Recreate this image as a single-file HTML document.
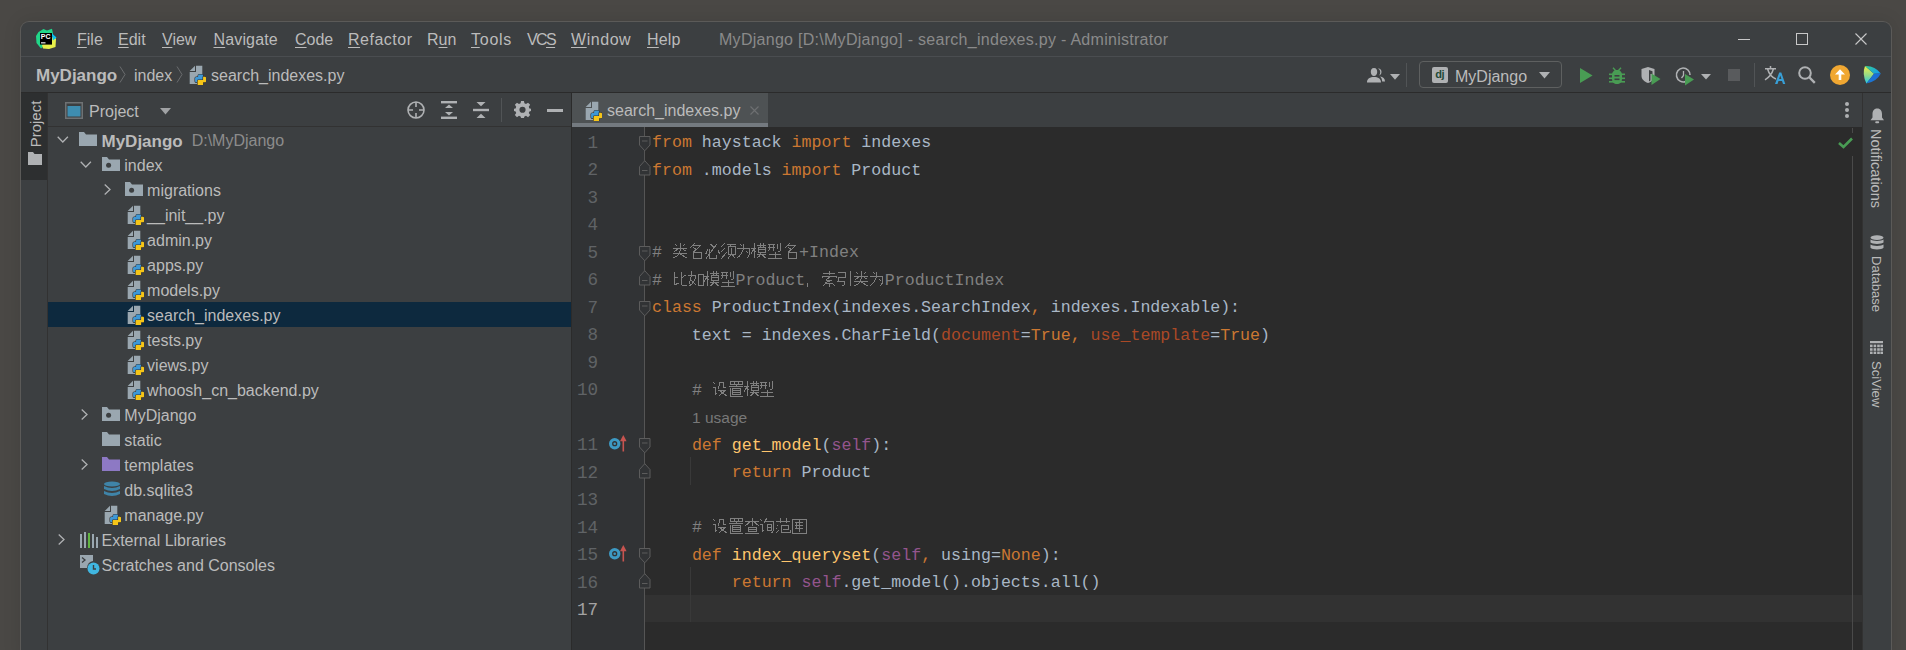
<!DOCTYPE html><html><head><meta charset="utf-8"><style>
*{margin:0;padding:0;box-sizing:border-box}
html,body{width:1906px;height:650px;overflow:hidden;background:#4a4845}
body{position:relative;font-family:"Liberation Sans",sans-serif;font-size:16px;color:#bbbbbb}
.a{position:absolute}
.win{position:absolute;left:20px;top:21px;width:1872px;height:640px;background:#3c3f41;border:1px solid #5b5a58;border-bottom:none;border-radius:9px 9px 0 0;box-shadow:0 0 18px rgba(0,0,0,0.10)}
.t{position:absolute;white-space:pre;line-height:18px;height:18px}
.ul{text-decoration:underline;text-decoration-thickness:1px;text-underline-offset:2px}
.code{position:absolute;left:652px;top:127px;font-family:"Liberation Mono",monospace;font-size:16.62px;color:#a9b7c6;white-space:pre}
.ln{height:27.5px;line-height:27.5px;padding-top:2px}
.k{color:#cc7832}.c{color:#808080}.s{color:#94558d}.p{color:#aa4926}.f{color:#ffc66d}
.num{position:absolute;width:30px;text-align:right;font-family:"Liberation Mono",monospace;font-size:17.6px;color:#606366;white-space:pre;line-height:20px}
.cj{display:inline-block;width:15.9px;height:16px;vertical-align:-2px;position:relative}
svg{position:absolute;overflow:visible}
.usage{font-family:"Liberation Sans",sans-serif;font-size:15.5px;color:#787878}
</style></head><body><svg width="0" height="0" style="position:absolute"><defs>
<symbol id="py" viewBox="0 0 20 22">
 <path d="M3.7 8.1 L9 2.8 V8.1 Z" fill="#9aa7b0"/>
 <path d="M10 2.8 H16.3 V20.9 H3.7 V9 H10 Z" fill="#9aa7b0"/>
 <g stroke="#2f3133" stroke-width="1.2" paint-order="stroke" stroke-linejoin="round" transform="translate(0.6 0.6)">
 <path d="M11.5 12.2 Q11.5 11 12.7 11 H15.3 Q16.5 11 16.5 12.2 V15.8 Q16.5 16.5 15.8 16.5 H11.8 Q11 16.5 11 17.3 V18.7 H9.7 Q8.5 18.7 8.5 17.5 V14.7 Q8.5 13.5 9.7 13.5 H11.5 Z" fill="#3e98d6"/>
 <path d="M16.5 13.2 H18.3 Q19.5 13.2 19.5 14.4 V17.5 Q19.5 18.7 18.3 18.7 H16.5 V20.6 Q16.5 21.8 15.3 21.8 H12.2 Q11 21.8 11 20.6 V17.3 Q11 16.5 11.8 16.5 H15.8 Q16.5 16.5 16.5 15.8 Z" fill="#f5c518"/>
 </g>
</symbol>
<symbol id="fold" viewBox="0 0 20 14">
 <path d="M1 0 H6 L8 2.5 H19 V14 H1 Z" fill="#9aa7b0"/>
</symbol>
<symbol id="foldm" viewBox="0 0 20 14">
 <path d="M1 0 H6 L8 2.5 H19 V14 H1 Z" fill="#9aa7b0"/>
 <circle cx="7.6" cy="8.3" r="2.5" fill="#3c3f41"/>
</symbol>
<symbol id="foldt" viewBox="0 0 20 14">
 <path d="M1 0 H6 L8 2.5 H19 V14 H1 Z" fill="#8d79c4"/>
</symbol>
<symbol id="g_lei" viewBox="0 0 16 16"><path d="M3 1 L5 3 M13 1 L11 3 M1 5 H15 M8 0 V8 M7 5 L2 9 M9 5 L14 8 M1 10 H15 M8 8 Q7 13 1 15 M8 11 L15 15" fill="none" stroke="#808080" stroke-width="1" shape-rendering="crispEdges"/></symbol><symbol id="g_ming" viewBox="0 0 16 16"><path d="M6.5 0.5 L1.5 5.5 M4.5 2.5 H12.5 L5.5 9 M5.5 4.5 L8 6.5 M5.2 9 H13.8 V15.5 H5.2 Z" fill="none" stroke="#808080" stroke-width="1" shape-rendering="crispEdges"/></symbol><symbol id="g_bi" viewBox="0 0 16 16"><path d="M6.5 1 L10 4.5 M4 6.2 L1.5 11.5 M5.5 5.5 V15 H12.5 V11.5 M13.2 0.5 L2 15.5 M14 7.5 L15.8 11" fill="none" stroke="#808080" stroke-width="1" shape-rendering="crispEdges"/></symbol><symbol id="g_xu" viewBox="0 0 16 16"><path d="M4.5 0.5 L1.4 4 M5 5 L1.4 8.5 M6.6 9.3 L1.4 15.5 M7.3 1 H15.8 M11.5 1 L10.5 3.2 M8.7 3.2 H15 V11.8 H8.7 Z M11.8 5 V10.5 M11 12 L8 15.5 M12.5 12 L15.5 15.5" fill="none" stroke="#808080" stroke-width="1" shape-rendering="crispEdges"/></symbol><symbol id="g_wei" viewBox="0 0 16 16"><path d="M4 1 L6 3 M1 5 H14 Q14 14 11 15 M8 1 Q8 10 1 15 M10 8 L12 10" fill="none" stroke="#808080" stroke-width="1" shape-rendering="crispEdges"/></symbol><symbol id="g_mo" viewBox="0 0 16 16"><path d="M0 5 H5 M3 0 V15 M3 6 L0 11 M3 7 L5 9 M6 2 H15 M9 0 V4 M12 0 V4 M7 4 H14 V9 H7 Z M7 6.5 H14 M6 11 H15 M10 9 Q10 13 6 15 M11 12 L15 15" fill="none" stroke="#808080" stroke-width="1" shape-rendering="crispEdges"/></symbol><symbol id="g_xing" viewBox="0 0 16 16"><path d="M1 1 H8 M1 4 H8 M3 1 Q3 7 1 8 M6 1 V8 M10 1 V6 M13 0 V8 Q13 9 11 9 M2 11 H14 M8 9 V15 M1 15 H15" fill="none" stroke="#808080" stroke-width="1" shape-rendering="crispEdges"/></symbol><symbol id="g_bi3" viewBox="0 0 16 16"><path d="M2 1 V14 L7 12 M2 6 H6 M9 1 V13 Q9 15 15 14 M9 7 L14 4" fill="none" stroke="#808080" stroke-width="1" shape-rendering="crispEdges"/></symbol><symbol id="g_ru" viewBox="0 0 16 16"><path d="M4 0 Q3 8 1 13 M0 4 H8 Q7 12 1 15 M3 9 L8 14 M10 3 H15 V14 H10 Z" fill="none" stroke="#808080" stroke-width="1" shape-rendering="crispEdges"/></symbol><symbol id="g_comma" viewBox="0 0 16 16"><path d="M2.5 12.5 Q4 14.5 1.5 16.5" fill="none" stroke="#808080" stroke-width="1" shape-rendering="crispEdges"/></symbol><symbol id="g_suo" viewBox="0 0 16 16"><path d="M2 2 H14 M8 0 V4 M1 5 V7 M15 5 V7 M1 5 H15 M9 6 L5 9 L11 10 M11 9 L4 12 H12 M8 12 V16 M4 13 L2 15 M12 13 L14 15" fill="none" stroke="#808080" stroke-width="1" shape-rendering="crispEdges"/></symbol><symbol id="g_yin" viewBox="0 0 16 16"><path d="M1 1 H8 V6 H2 L1 10 H8 Q8 15 5 15 M13 0 V15" fill="none" stroke="#808080" stroke-width="1" shape-rendering="crispEdges"/></symbol><symbol id="g_she" viewBox="0 0 16 16"><path d="M1 1 L3 3 M1 6 H3 V14 L5 12 M7 1 V5 Q7 7 6 8 M7 1 H11 V6 H14 M6 9 H14 L7 15 M8 10 L15 15" fill="none" stroke="#808080" stroke-width="1" shape-rendering="crispEdges"/></symbol><symbol id="g_zhi" viewBox="0 0 16 16"><path d="M2 0 H14 V3 H2 Z M6 0 V3 M10 0 V3 M1 5 H15 M8 4 V6 M4 7 H12 V13 H4 Z M4 9 H12 M4 11 H12 M2 7 V15 H15" fill="none" stroke="#808080" stroke-width="1" shape-rendering="crispEdges"/></symbol><symbol id="g_cha" viewBox="0 0 16 16"><path d="M1 3 H15 M8 0 V8 M7 3 L1 8 M9 3 L15 8 M4 9 H12 V13 H4 Z M4 11 H12 M1 15 H15" fill="none" stroke="#808080" stroke-width="1" shape-rendering="crispEdges"/></symbol><symbol id="g_xun" viewBox="0 0 16 16"><path d="M1 1 L3 3 M1 6 H3 V14 L5 12 M8 0 L5 5 M6 3 H14 V13 Q14 15 12 15 M8 6 H12 V12 H8 Z M8 9 H12" fill="none" stroke="#808080" stroke-width="1" shape-rendering="crispEdges"/></symbol><symbol id="g_fan" viewBox="0 0 16 16"><path d="M1 3 H15 M5 0 V5 M11 0 V5 M2 7 L3 8 M1 10 L2 11 M1 15 L4 12 M6 7 H13 V11 H8 M6 7 V14 H15 V12" fill="none" stroke="#808080" stroke-width="1" shape-rendering="crispEdges"/></symbol><symbol id="g_wei2" viewBox="0 0 16 16"><path d="M1 1 H15 V15 H1 Z M4 4 H12 M4 7 H12 M4 10 H12 M8 2 V14 M5 4 V10" fill="none" stroke="#808080" stroke-width="1" shape-rendering="crispEdges"/></symbol></defs></svg><div class="win"></div><div class="a" style="left:21px;top:56px;width:1870px;height:1px;background:#4a4d50"></div><div class="a" style="left:21px;top:92px;width:1870px;height:1px;background:#2b2b2b"></div><svg style="left:36px;top:28px" width="21" height="22" viewBox="0 0 21 22"><path d="M2.5 4 L7.5 1 L11 2.5 L16 0.8 L17 6 L8 18 L5 20.5 L0.5 15 L0 8 Z" fill="#21d789"/><path d="M6 17 L16 9 L20 10.5 L19.5 19 L13 21 L7 20.5 Z" fill="#e8f04a"/><path d="M15.5 5 L20.5 9.5 L17 12.5 Z" fill="#07c3f2"/><rect x="4" y="5" width="12" height="11.6" fill="#000"/><text x="4.8" y="11.3" font-family="Liberation Sans" font-weight="bold" font-size="7" fill="#fff">PC</text><rect x="5" y="14.3" width="4.5" height="1.1" fill="#fff"/></svg><div class="t" style="left:77px;top:31px;letter-spacing:0px"><span class="ul">F</span>ile</div><div class="t" style="left:118px;top:31px;letter-spacing:0px"><span class="ul">E</span>dit</div><div class="t" style="left:162px;top:31px;letter-spacing:0px"><span class="ul">V</span>iew</div><div class="t" style="left:213.5px;top:31px;letter-spacing:0.15px"><span class="ul">N</span>avigate</div><div class="t" style="left:295px;top:31px;letter-spacing:0px"><span class="ul">C</span>ode</div><div class="t" style="left:348px;top:31px;letter-spacing:0.5px"><span class="ul">R</span>efactor</div><div class="t" style="left:427px;top:31px;letter-spacing:0px">R<span class="ul">u</span>n</div><div class="t" style="left:471px;top:31px;letter-spacing:0.75px"><span class="ul">T</span>ools</div><div class="t" style="left:527px;top:31px;letter-spacing:-1.6px">VC<span class="ul">S</span></div><div class="t" style="left:571px;top:31px;letter-spacing:0.55px"><span class="ul">W</span>indow</div><div class="t" style="left:647px;top:31px;letter-spacing:0.2px"><span class="ul">H</span>elp</div><div class="t" style="left:719px;top:31px;color:#8a8a8a;letter-spacing:0.28px">MyDjango [D:\MyDjango] - search_indexes.py - Administrator</div><div class="a" style="left:1738px;top:39px;width:12px;height:1px;background:#c8c8c8"></div><div class="a" style="left:1796px;top:33px;width:12px;height:12px;border:1px solid #c8c8c8"></div><svg style="left:1855px;top:33px" width="12" height="12"><path d="M0.5 0.5 L11.5 11.5 M11.5 0.5 L0.5 11.5" stroke="#c8c8c8" stroke-width="1.1"/></svg><div class="t" style="left:36px;top:67px;font-weight:bold;font-size:17px">MyDjango</div><svg style="left:119px;top:66px" width="8" height="17"><path d="M1 0.5 L6 8.5 L1 16.5" stroke="#6a6c6e" fill="none" stroke-width="1"/></svg><div class="t" style="left:134px;top:67px">index</div><svg style="left:176px;top:66px" width="8" height="17"><path d="M1 0.5 L6 8.5 L1 16.5" stroke="#6a6c6e" fill="none" stroke-width="1"/></svg><svg style="left:186.3px;top:63px" width="20" height="22"><use href="#py"/></svg><div class="t" style="left:211px;top:67px">search_indexes.py</div><div class="a" style="left:21px;top:93px;width:26px;height:87px;background:#2d2f30"></div><div class="a" style="left:47px;top:93px;width:1px;height:560px;background:#323232"></div><div class="t" style="left:36px;top:124px;transform:translate(-50%,-50%) rotate(-90deg);font-size:15px;color:#bbbbbb">Project</div><svg style="left:28px;top:152px" width="14" height="13"><path d="M0 0 H5 L6.5 2 H14 V13 H0 Z" fill="#afb1b3"/></svg><div class="a" style="left:48px;top:126px;width:523px;height:1px;background:#323232"></div><div class="a" style="left:571px;top:93px;width:1px;height:560px;background:#2b2b2b"></div><svg style="left:65px;top:102px" width="18" height="17"><rect x="0.75" y="0.75" width="16.5" height="15.5" fill="none" stroke="#6e7274" stroke-width="1.5"/><rect x="2.5" y="4" width="13" height="10.5" fill="#3e8db0"/></svg><div class="t" style="left:89px;top:102.5px">Project</div><svg style="left:160px;top:108px" width="12" height="7"><path d="M0 0 H11 L5.5 6.5 Z" fill="#a0a2a4"/></svg><svg style="left:407px;top:101px" width="18" height="18"><circle cx="9" cy="9" r="8" fill="none" stroke="#afb1b3" stroke-width="1.6"/><path d="M9 1 V6 M9 12 V17 M1 9 H6 M12 9 H17" stroke="#afb1b3" stroke-width="1.6"/></svg><svg style="left:441px;top:101px" width="16" height="18"><rect x="0" y="0" width="16" height="2.4" fill="#afb1b3"/><rect x="0" y="15.6" width="16" height="2.4" fill="#afb1b3"/><path d="M4 7 L8 3.5 L12 7 Z M4 11 L8 14.5 L12 11 Z" fill="#afb1b3"/></svg><svg style="left:473px;top:101px" width="16" height="18"><rect x="0" y="7.8" width="16" height="2.4" fill="#afb1b3"/><path d="M3.5 1 H12.5 L8 5.3 Z M3.5 17 H12.5 L8 12.7 Z" fill="#afb1b3"/></svg><div class="a" style="left:501px;top:98px;width:1px;height:24px;background:#515456"></div><svg style="left:514px;top:101px" width="17" height="17" viewBox="0 0 16 16"><path fill="#afb1b3" fill-rule="evenodd" d="M6.6 0 H9.4 L9.8 2.2 L11.3 2.9 L13.2 1.6 L15.2 3.6 L13.9 5.5 L14.5 7 L16 7.4 V9.4 L14.5 9.9 L13.9 11.3 L15.2 13.2 L13.2 15.2 L11.3 13.9 L9.8 14.5 L9.4 16 H6.6 L6.2 14.5 L4.7 13.9 L2.8 15.2 L0.8 13.2 L2.1 11.3 L1.5 9.9 L0 9.4 V7.4 L1.5 7 L2.1 5.5 L0.8 3.6 L2.8 1.6 L4.7 2.9 L6.2 2.2 Z M8 5.3 A2.9 2.9 0 1 0 8 11.1 A2.9 2.9 0 1 0 8 5.3 Z"/></svg><div class="a" style="left:547px;top:109px;width:16px;height:2.5px;background:#afb1b3"></div><div class="a" style="left:48px;top:302px;width:523px;height:25px;background:#0d293e"></div><svg style="left:57.0px;top:136.0px" width="12" height="7"><path d="M0.7 0.7 L5.8 6 L10.9 0.7" stroke="#afb1b3" stroke-width="1.3" fill="none"/></svg><svg style="left:78.2px;top:131.5px" width="20" height="14"><use href="#fold"/></svg><div class="t" style="left:101.5px;top:132.3px"><b style="font-size:17px;position:relative;top:0.8px">MyDjango</b><span style="color:#8c8c8c">  D:\MyDjango</span></div><svg style="left:79.8px;top:161.0px" width="12" height="7"><path d="M0.7 0.7 L5.8 6 L10.9 0.7" stroke="#afb1b3" stroke-width="1.3" fill="none"/></svg><svg style="left:101.0px;top:156.5px" width="20" height="14"><use href="#foldm"/></svg><div class="t" style="left:124.3px;top:157.3px">index</div><svg style="left:104.0px;top:184.0px" width="7" height="11"><path d="M0.7 0.5 L6 5.5 L0.7 10.5" stroke="#afb1b3" stroke-width="1.3" fill="none"/></svg><svg style="left:123.8px;top:181.5px" width="20" height="14"><use href="#foldm"/></svg><div class="t" style="left:147.1px;top:182.3px">migrations</div><svg style="left:124.0px;top:202.5px" width="20" height="22"><use href="#py"/></svg><div class="t" style="left:147.1px;top:207.3px">__init__.py</div><svg style="left:124.0px;top:227.5px" width="20" height="22"><use href="#py"/></svg><div class="t" style="left:147.1px;top:232.3px">admin.py</div><svg style="left:124.0px;top:252.5px" width="20" height="22"><use href="#py"/></svg><div class="t" style="left:147.1px;top:257.3px">apps.py</div><svg style="left:124.0px;top:277.5px" width="20" height="22"><use href="#py"/></svg><div class="t" style="left:147.1px;top:282.3px">models.py</div><svg style="left:124.0px;top:302.5px" width="20" height="22"><use href="#py"/></svg><div class="t" style="left:147.1px;top:307.3px">search_indexes.py</div><svg style="left:124.0px;top:327.5px" width="20" height="22"><use href="#py"/></svg><div class="t" style="left:147.1px;top:332.3px">tests.py</div><svg style="left:124.0px;top:352.5px" width="20" height="22"><use href="#py"/></svg><div class="t" style="left:147.1px;top:357.3px">views.py</div><svg style="left:124.0px;top:377.5px" width="20" height="22"><use href="#py"/></svg><div class="t" style="left:147.1px;top:382.3px">whoosh_cn_backend.py</div><svg style="left:81.2px;top:409.0px" width="7" height="11"><path d="M0.7 0.5 L6 5.5 L0.7 10.5" stroke="#afb1b3" stroke-width="1.3" fill="none"/></svg><svg style="left:101.0px;top:406.5px" width="20" height="14"><use href="#foldm"/></svg><div class="t" style="left:124.3px;top:407.3px">MyDjango</div><svg style="left:101.0px;top:431.5px" width="20" height="14"><use href="#fold"/></svg><div class="t" style="left:124.3px;top:432.3px">static</div><svg style="left:81.2px;top:459.0px" width="7" height="11"><path d="M0.7 0.5 L6 5.5 L0.7 10.5" stroke="#afb1b3" stroke-width="1.3" fill="none"/></svg><svg style="left:101.0px;top:456.5px" width="20" height="14"><use href="#foldt"/></svg><div class="t" style="left:124.3px;top:457.3px">templates</div><svg style="left:102.8px;top:480.5px" width="18" height="18"><g fill="#3f84a8"><ellipse cx="9" cy="3" rx="8" ry="2.6"/><path d="M1 5 Q9 9 17 5 V8 Q9 12 1 8 Z"/><path d="M1 10 Q9 14 17 10 V13 Q9 17 1 13 Z"/></g></svg><div class="t" style="left:124.3px;top:482.3px">db.sqlite3</div><svg style="left:101.2px;top:502.5px" width="20" height="22"><use href="#py"/></svg><div class="t" style="left:124.3px;top:507.3px">manage.py</div><svg style="left:58.4px;top:534.0px" width="7" height="11"><path d="M0.7 0.5 L6 5.5 L0.7 10.5" stroke="#afb1b3" stroke-width="1.3" fill="none"/></svg><svg style="left:80.0px;top:530.5px" width="18" height="18"><g fill="#9aa7b0"><rect x="0" y="3" width="2" height="14"/><rect x="4" y="1" width="2" height="16"/><rect x="12" y="3" width="2" height="14"/><rect x="16" y="6" width="2" height="11"/></g><rect x="8" y="2" width="2" height="15" fill="#62b543"/></svg><div class="t" style="left:101.5px;top:532.3px">External Libraries</div><svg style="left:80.0px;top:554.5px" width="20" height="20"><path d="M0 0 H13 V6 A7 7 0 0 0 7 13 H0 Z" fill="#9aa7b0"/><path d="M2 2.5 L5 5 L2 7.5" stroke="#3c3f41" stroke-width="1.3" fill="none"/><circle cx="13.5" cy="13.5" r="6" fill="#40b6e0"/><path d="M13.5 10 V14 H16" stroke="#3c3f41" stroke-width="1.4" fill="none"/></svg><div class="t" style="left:101.5px;top:557.3px">Scratches and Consoles</div><div class="a" style="left:572px;top:93px;width:196px;height:34px;background:#4e5254"></div><div class="a" style="left:572px;top:123px;width:196px;height:4px;background:#747a80"></div><svg style="left:582px;top:99px" width="20" height="22"><g transform="scale(1)"><use href="#py"/></g></svg><div class="t" style="left:607px;top:102px">search_indexes.py</div><svg style="left:750px;top:105.5px" width="9" height="9"><path d="M0.5 0.5 L8.5 8.5 M8.5 0.5 L0.5 8.5" stroke="#6e7072" stroke-width="1.1"/></svg><div class="a" style="left:1845px;top:102px;width:4px;height:4px;border-radius:50%;background:#afb1b3"></div><div class="a" style="left:1845px;top:108px;width:4px;height:4px;border-radius:50%;background:#afb1b3"></div><div class="a" style="left:1845px;top:114px;width:4px;height:4px;border-radius:50%;background:#afb1b3"></div><div class="a" style="left:572px;top:127px;width:1290px;height:530px;background:#2b2b2b"></div><div class="a" style="left:572px;top:127px;width:72px;height:530px;background:#313335"></div><div class="a" style="left:644px;top:127px;width:1px;height:530px;background:#555555"></div><div class="a" style="left:645px;top:594.5px;width:1217px;height:27.5px;background:#323232"></div><div class="a" style="left:1852px;top:156px;width:1px;height:500px;background:#4a4a4a"></div><div class="a" style="left:1852px;top:128px;width:1px;height:5px;background:#4a4a4a"></div><svg style="left:1838px;top:137px" width="15" height="12"><path d="M1 6 L5.5 10 L14 1.5" stroke="#499c54" stroke-width="2.6" fill="none"/></svg><div class="code"><div class="ln"><span class="k">from</span> haystack <span class="k">import</span> indexes</div><div class="ln"><span class="k">from</span> .models <span class="k">import</span> Product</div><div class="ln"></div><div class="ln"></div><div class="ln"><span class="c"># <span class="cj"><svg width="16" height="16" style="left:0;top:0"><use href="#g_lei"/></svg></span><span class="cj"><svg width="16" height="16" style="left:0;top:0"><use href="#g_ming"/></svg></span><span class="cj"><svg width="16" height="16" style="left:0;top:0"><use href="#g_bi"/></svg></span><span class="cj"><svg width="16" height="16" style="left:0;top:0"><use href="#g_xu"/></svg></span><span class="cj"><svg width="16" height="16" style="left:0;top:0"><use href="#g_wei"/></svg></span><span class="cj"><svg width="16" height="16" style="left:0;top:0"><use href="#g_mo"/></svg></span><span class="cj"><svg width="16" height="16" style="left:0;top:0"><use href="#g_xing"/></svg></span><span class="cj"><svg width="16" height="16" style="left:0;top:0"><use href="#g_ming"/></svg></span>+Index</span></div><div class="ln"><span class="c"># <span class="cj"><svg width="16" height="16" style="left:0;top:0"><use href="#g_bi3"/></svg></span><span class="cj"><svg width="16" height="16" style="left:0;top:0"><use href="#g_ru"/></svg></span><span class="cj"><svg width="16" height="16" style="left:0;top:0"><use href="#g_mo"/></svg></span><span class="cj"><svg width="16" height="16" style="left:0;top:0"><use href="#g_xing"/></svg></span>Product<span class="cj"><svg width="16" height="16" style="left:0;top:0"><use href="#g_comma"/></svg></span><span class="cj"><svg width="16" height="16" style="left:0;top:0"><use href="#g_suo"/></svg></span><span class="cj"><svg width="16" height="16" style="left:0;top:0"><use href="#g_yin"/></svg></span><span class="cj"><svg width="16" height="16" style="left:0;top:0"><use href="#g_lei"/></svg></span><span class="cj"><svg width="16" height="16" style="left:0;top:0"><use href="#g_wei"/></svg></span>ProductIndex</span></div><div class="ln"><span class="k">class</span> ProductIndex(indexes.SearchIndex<span class="k">,</span> indexes.Indexable):</div><div class="ln">    text = indexes.CharField(<span class="p">document</span>=<span class="k">True,</span> <span class="p">use_template</span>=<span class="k">True</span>)</div><div class="ln"></div><div class="ln">    <span class="c"># <span class="cj"><svg width="16" height="16" style="left:0;top:0"><use href="#g_she"/></svg></span><span class="cj"><svg width="16" height="16" style="left:0;top:0"><use href="#g_zhi"/></svg></span><span class="cj"><svg width="16" height="16" style="left:0;top:0"><use href="#g_mo"/></svg></span><span class="cj"><svg width="16" height="16" style="left:0;top:0"><use href="#g_xing"/></svg></span></span></div><div class="ln" style="padding-left:40px"><span class="usage">1 usage</span></div><div class="ln">    <span class="k">def</span> <span class="f">get_model</span>(<span class="s">self</span>):</div><div class="ln">        <span class="k">return</span> Product</div><div class="ln"></div><div class="ln">    <span class="c"># <span class="cj"><svg width="16" height="16" style="left:0;top:0"><use href="#g_she"/></svg></span><span class="cj"><svg width="16" height="16" style="left:0;top:0"><use href="#g_zhi"/></svg></span><span class="cj"><svg width="16" height="16" style="left:0;top:0"><use href="#g_cha"/></svg></span><span class="cj"><svg width="16" height="16" style="left:0;top:0"><use href="#g_xun"/></svg></span><span class="cj"><svg width="16" height="16" style="left:0;top:0"><use href="#g_fan"/></svg></span><span class="cj"><svg width="16" height="16" style="left:0;top:0"><use href="#g_wei2"/></svg></span></span></div><div class="ln">    <span class="k">def</span> <span class="f">index_queryset</span>(<span class="s">self</span><span class="k">,</span> using=<span class="k">None</span>):</div><div class="ln">        <span class="k">return</span> <span class="s">self</span>.get_model().objects.all()</div><div class="ln"></div></div><div class="num" style="left:568px;top:132.5px;color:#606366">1</div><div class="num" style="left:568px;top:160.0px;color:#606366">2</div><div class="num" style="left:568px;top:187.5px;color:#606366">3</div><div class="num" style="left:568px;top:215.0px;color:#606366">4</div><div class="num" style="left:568px;top:242.5px;color:#606366">5</div><div class="num" style="left:568px;top:270.0px;color:#606366">6</div><div class="num" style="left:568px;top:297.5px;color:#606366">7</div><div class="num" style="left:568px;top:325.0px;color:#606366">8</div><div class="num" style="left:568px;top:352.5px;color:#606366">9</div><div class="num" style="left:568px;top:380.0px;color:#606366">10</div><div class="num" style="left:568px;top:435.0px;color:#606366">11</div><div class="num" style="left:568px;top:462.5px;color:#606366">12</div><div class="num" style="left:568px;top:490.0px;color:#606366">13</div><div class="num" style="left:568px;top:517.5px;color:#606366">14</div><div class="num" style="left:568px;top:545.0px;color:#606366">15</div><div class="num" style="left:568px;top:572.5px;color:#606366">16</div><div class="num" style="left:568px;top:600.0px;color:#a4a3a3">17</div><svg style="left:638.5px;top:135.7px" width="12" height="16"><path d="M0.5 0.5 H11 V9 L5.75 14.8 L0.5 9 Z" fill="#313335" stroke="#5c5c5c" stroke-width="1"/><path d="M3 5 H8.5" stroke="#5c5c5c" stroke-width="1"/></svg><svg style="left:638.5px;top:245.7px" width="12" height="16"><path d="M0.5 0.5 H11 V9 L5.75 14.8 L0.5 9 Z" fill="#313335" stroke="#5c5c5c" stroke-width="1"/><path d="M3 5 H8.5" stroke="#5c5c5c" stroke-width="1"/></svg><svg style="left:638.5px;top:300.7px" width="12" height="16"><path d="M0.5 0.5 H11 V9 L5.75 14.8 L0.5 9 Z" fill="#313335" stroke="#5c5c5c" stroke-width="1"/><path d="M3 5 H8.5" stroke="#5c5c5c" stroke-width="1"/></svg><svg style="left:638.5px;top:438.2px" width="12" height="16"><path d="M0.5 0.5 H11 V9 L5.75 14.8 L0.5 9 Z" fill="#313335" stroke="#5c5c5c" stroke-width="1"/><path d="M3 5 H8.5" stroke="#5c5c5c" stroke-width="1"/></svg><svg style="left:638.5px;top:548.2px" width="12" height="16"><path d="M0.5 0.5 H11 V9 L5.75 14.8 L0.5 9 Z" fill="#313335" stroke="#5c5c5c" stroke-width="1"/><path d="M3 5 H8.5" stroke="#5c5c5c" stroke-width="1"/></svg><svg style="left:638.5px;top:160.2px" width="12" height="16"><path d="M0.5 15 H11 V6.5 L5.75 0.7 L0.5 6.5 Z" fill="#313335" stroke="#5c5c5c" stroke-width="1"/><path d="M3 10.5 H8.5" stroke="#5c5c5c" stroke-width="1"/></svg><svg style="left:638.5px;top:270.2px" width="12" height="16"><path d="M0.5 15 H11 V6.5 L5.75 0.7 L0.5 6.5 Z" fill="#313335" stroke="#5c5c5c" stroke-width="1"/><path d="M3 10.5 H8.5" stroke="#5c5c5c" stroke-width="1"/></svg><svg style="left:638.5px;top:462.7px" width="12" height="16"><path d="M0.5 15 H11 V6.5 L5.75 0.7 L0.5 6.5 Z" fill="#313335" stroke="#5c5c5c" stroke-width="1"/><path d="M3 10.5 H8.5" stroke="#5c5c5c" stroke-width="1"/></svg><svg style="left:638.5px;top:572.7px" width="12" height="16"><path d="M0.5 15 H11 V6.5 L5.75 0.7 L0.5 6.5 Z" fill="#313335" stroke="#5c5c5c" stroke-width="1"/><path d="M3 10.5 H8.5" stroke="#5c5c5c" stroke-width="1"/></svg><svg style="left:609px;top:437.7px" width="12" height="12"><circle cx="5.7" cy="5.7" r="5.7" fill="#3d9ac4"/><circle cx="5.7" cy="5.7" r="2.6" fill="#313335"/><circle cx="5.7" cy="5.7" r="1.3" fill="#3d9ac4"/></svg><svg style="left:619.5px;top:435.0px" width="7" height="17"><path d="M3.3 3 V16.5" stroke="#c75450" stroke-width="1.6"/><path d="M0 6.2 L3.3 0 L6.6 6.2 Z" fill="#c75450"/></svg><svg style="left:609px;top:547.7px" width="12" height="12"><circle cx="5.7" cy="5.7" r="5.7" fill="#3d9ac4"/><circle cx="5.7" cy="5.7" r="2.6" fill="#313335"/><circle cx="5.7" cy="5.7" r="1.3" fill="#3d9ac4"/></svg><svg style="left:619.5px;top:545.0px" width="7" height="17"><path d="M3.3 3 V16.5" stroke="#c75450" stroke-width="1.6"/><path d="M0 6.2 L3.3 0 L6.6 6.2 Z" fill="#c75450"/></svg><div class="a" style="left:690px;top:457.0px;width:1px;height:27.5px;background:#393939"></div><div class="a" style="left:690px;top:567.0px;width:1px;height:55px;background:#393939"></div><svg style="left:1367px;top:67px" width="20" height="16"><path d="M7 1 C4.5 1 3.8 3 3.8 5 C3.8 7 5 9 7 9 C9 9 10.2 7 10.2 5 C10.2 3 9.5 1 7 1 Z M0 15.5 C0 11.5 3 10 7 10 C11 10 14 11.5 14 15.5 Z" fill="#afb1b3"/><path d="M11 1.5 C13 1.2 14.5 2.5 14.5 4.8 C14.5 6.8 13.5 8.2 12 8.6 C13 7.5 13.2 6 13.2 5 C13.2 3.5 12.5 2.2 11 1.5 Z M13 9.6 C16 10 18 11.5 18 14.5 H15.2 C15 12.3 14.4 10.8 13 9.6 Z" fill="#afb1b3"/></svg><svg style="left:1390px;top:73.5px" width="11" height="6"><path d="M0 0 H10 L5 5.8 Z" fill="#afb1b3"/></svg><div class="a" style="left:1406px;top:63px;width:1px;height:24px;background:#515456"></div><div class="a" style="left:1419px;top:61px;width:143px;height:27px;border:1px solid #5e6060;border-radius:4px"></div><div class="a" style="left:1432px;top:67px;width:15.5px;height:15.5px;border-radius:2px;background:#afb1b3"></div><div class="a" style="left:1432px;top:65.5px;width:15.5px;text-align:center;font-weight:bold;font-size:11px;line-height:16px;color:#1f4a37;letter-spacing:-0.5px">dj</div><div class="t" style="left:1455px;top:67.5px">MyDjango</div><svg style="left:1539px;top:72px" width="12" height="7"><path d="M0 0 H11 L5.5 6.5 Z" fill="#afb1b3"/></svg><svg style="left:1580px;top:67.5px" width="13" height="15"><path d="M0 0 L12.6 7.5 L0 15 Z" fill="#499c54"/></svg><svg style="left:1609px;top:66.5px" width="16" height="18"><g fill="#499c54"><path d="M4.5 0.3 L7 3 H9 L11.5 0.3 L12.5 1.2 L10.5 3.6 C12 4.5 13 6 13 8 V12 C13 15 11 17 8 17 C5 17 3 15 3 12 V8 C3 6 4 4.5 5.5 3.6 L3.5 1.2 Z"/><rect x="0" y="6.5" width="16" height="1.6"/><rect x="0" y="10.5" width="16" height="1.6"/><rect x="0" y="14" width="16" height="1.6"/></g><g fill="#3c3f41"><rect x="5.5" y="8" width="5" height="1.6"/><rect x="5.5" y="11.5" width="5" height="1.6"/></g></svg><svg style="left:1640.5px;top:67px" width="20" height="18"><path d="M7 0 L13.5 2 V9 C13.5 12 11 14.5 7 16 C3 14.5 0.5 12 0.5 9 V2 Z" fill="#afb1b3"/><path d="M8 3 L11.5 4.2 V7 H9.5 V13.5 C9 14 8.5 14.3 8 14.5 Z" fill="#3c3f41"/><path d="M10.5 6.5 L19.5 12 L10.5 18 Z" fill="#499c54"/></svg><svg style="left:1675px;top:66.5px" width="20" height="19"><path d="M8 1 A7 7 0 1 0 11 14.5" fill="none" stroke="#afb1b3" stroke-width="1.6"/><path d="M8 1 A7 7 0 0 1 15 8" fill="none" stroke="#afb1b3" stroke-width="1.6"/><path d="M8.5 4 V8.5 L6.5 11" fill="none" stroke="#afb1b3" stroke-width="1.3"/><path d="M10 7 L19 12.5 L10 18.5 Z" fill="#499c54"/></svg><svg style="left:1701px;top:74px" width="11" height="6"><path d="M0 0 H10 L5 5.5 Z" fill="#afb1b3"/></svg><div class="a" style="left:1728px;top:69px;width:12px;height:12px;background:#595b5d"></div><div class="a" style="left:1754px;top:63px;width:1px;height:24px;background:#515456"></div><svg style="left:1765px;top:66px" width="21" height="19"><path d="M0 2.8 H11 M5.5 0 V2.8 M2.5 2.8 C4 8 7 11.5 11 13 M8.5 2.8 C7 8 4 11.5 0 13.8" fill="none" stroke="#afb1b3" stroke-width="1.5"/><path d="M10 18 L14.2 6.5 H16.3 L20.3 18 H18 L17 15 H13.5 L12.5 18 Z M14.1 13 H16.4 L15.25 9.5 Z" fill="#389fd6"/></svg><svg style="left:1798px;top:66px" width="18" height="18"><circle cx="7" cy="7" r="5.8" fill="none" stroke="#afb1b3" stroke-width="2"/><path d="M11 11 L16.8 16.8" stroke="#afb1b3" stroke-width="2.4"/></svg><svg style="left:1830px;top:65px" width="20" height="20"><circle cx="10" cy="10" r="10" fill="#f0a732"/><path d="M10 4.3 L15 9.5 H11.3 V15 H8.7 V9.5 H5 Z" fill="#ffffff"/></svg><svg style="left:1858px;top:62px" width="28" height="26"><defs><linearGradient id="cwm1" x1="0" y1="0" x2="0" y2="1"><stop offset="0" stop-color="#f0ee48"/><stop offset="0.55" stop-color="#90d98a"/><stop offset="1" stop-color="#20c8ec"/></linearGradient><linearGradient id="cwm2" x1="0" y1="0" x2="1" y2="0.4"><stop offset="0" stop-color="#3ad38a"/><stop offset="1" stop-color="#169fe6"/></linearGradient><linearGradient id="cwm3" x1="1" y1="0" x2="0" y2="1"><stop offset="0" stop-color="#1a6ad8"/><stop offset="1" stop-color="#1c78d0"/></linearGradient></defs><path d="M7 4 Q3.8 12 8.4 21.6 L16 11.8 Z" fill="url(#cwm1)"/><path d="M7 4 Q17 3.5 22.8 11.6 L16 11.8 Z" fill="url(#cwm2)"/><path d="M16 11.8 L22.8 11.6 Q19 19.5 8.4 21.6 Z" fill="url(#cwm3)"/></svg><svg style="left:1869.5px;top:107.5px" width="15" height="16"><path d="M7.2 0.5 C3.8 0.5 2.5 3 2.5 6 V9.5 L0.5 12.2 H14 L12 9.5 V6 C12 3 10.7 0.5 7.2 0.5 Z" fill="#afb1b3"/><rect x="5.2" y="13.3" width="4" height="2" rx="1" fill="#afb1b3"/></svg><div class="t" style="left:1885px;top:129px;transform-origin:0 0;transform:rotate(90deg);font-size:14.5px;color:#bbbbbb">Notifications</div><svg style="left:1869.5px;top:235px" width="14" height="16"><g fill="#afb1b3"><ellipse cx="7" cy="2.6" rx="6.5" ry="2.4"/><path d="M0.5 4.6 C2 6.5 12 6.5 13.5 4.6 V7.6 C12 9.5 2 9.5 0.5 7.6 Z"/><path d="M0.5 9.6 C2 11.5 12 11.5 13.5 9.6 V12.8 C12 15 2 15 0.5 12.8 Z"/></g></svg><div class="t" style="left:1885px;top:256px;transform-origin:0 0;transform:rotate(90deg);font-size:13.1px;color:#bbbbbb">Database</div><svg style="left:1870px;top:341px" width="13" height="13"><g fill="#afb1b3"><rect x="0" y="0" width="13" height="2.2"/><rect x="0" y="3.6" width="2.6" height="2.6"/><rect x="3.6" y="3.6" width="2.6" height="2.6"/><rect x="7.2" y="3.6" width="2.6" height="2.6"/><rect x="10.4" y="3.6" width="2.6" height="2.6"/><rect x="0" y="7.2" width="2.6" height="2.6"/><rect x="3.6" y="7.2" width="2.6" height="2.6"/><rect x="7.2" y="7.2" width="2.6" height="2.6"/><rect x="10.4" y="7.2" width="2.6" height="2.6"/><rect x="0" y="10.6" width="2.6" height="2.4"/><rect x="3.6" y="10.6" width="2.6" height="2.4"/><rect x="7.2" y="10.6" width="2.6" height="2.4"/><rect x="10.4" y="10.6" width="2.6" height="2.4"/></g></svg><div class="t" style="left:1885px;top:361px;transform-origin:0 0;transform:rotate(90deg);font-size:13.1px;color:#bbbbbb">SciView</div><div class="a" style="left:1862px;top:93px;width:1px;height:560px;background:#323232"></div></body></html>
